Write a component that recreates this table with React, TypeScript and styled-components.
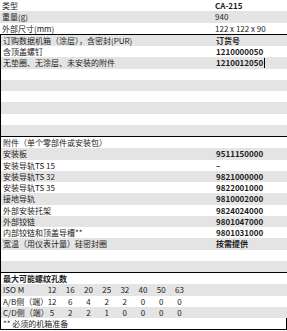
import styled, { createGlobalStyle } from 'styled-components';

const GlobalStyle = createGlobalStyle`
    html, body {
        margin: 0;
        padding: 0;
        background: #ffffff;
    }
    body {
        font-family: "Noto Sans CJK SC", "Noto Sans", sans-serif;
        font-size: 8px;
        color: #1c1c1c;
    }
`;

type Row = { label: string; value?: string; bold?: boolean; caret?: boolean };

const general: Row[] = [
    { label: '类型', value: 'CA-215', bold: true },
    { label: '重量(g)', value: '940' },
    { label: '外部尺寸(mm)', value: '122 x 122 x 90' },
];

const ordering: Row[] = [
    { label: '订购数据机箱（涂层），含密封(PUR)', value: '订货号', bold: true },
    { label: '含顶盖螺钉', value: '1210000050', bold: true },
    { label: '无垫圈、无涂层、未安装的附件', value: '1210012050', bold: true, caret: true },
    { label: '' },
    { label: '' },
    { label: '' },
    { label: '' },
    { label: '' },
    { label: '' },
];

const accessories: Row[] = [
    { label: '附件（单个零部件或安装包）' },
    { label: '安装板', value: '9511150000', bold: true },
    { label: '安装导轨TS 15', value: '–', bold: true },
    { label: '安装导轨TS 32', value: '9821000000', bold: true },
    { label: '安装导轨TS 35', value: '9822001000', bold: true },
    { label: '接地导轨', value: '9810002000', bold: true },
    { label: '外部安装托架', value: '9824024000', bold: true },
    { label: '外部铰链', value: '9801047000', bold: true },
    { label: '内部铰链和顶盖导槽**', value: '9801031000', bold: true },
    { label: '宽温（用仪表计量）硅密封圈', value: '按需提供', bold: true },
    { label: '' },
    { label: '' },
];

const sizes = ['12', '16', '20', '25', '32', '40', '50', '63'];
const sideAB = ['12', '6', '4', '2', '2', '0', '0', '0'];
const sideCD = ['5', '2', '2', '1', '0', '0', '0', '0'];

export default function App() {
    return (
        <>
            <GlobalStyle />
            <Sheet>
                <Section>
                    {general.map((r, i) => (
                        <DataRow key={i} row={r} shade={i % 2 === 1} />
                    ))}
                </Section>
                <Section $edged>
                    {ordering.map((r, i) => (
                        <DataRow key={i} row={r} shade={i % 2 === 0} />
                    ))}
                </Section>
                <Section $edged>
                    {accessories.map((r, i) => (
                        <DataRow key={i} row={r} shade={i % 2 === 1} />
                    ))}
                </Section>
                <Section $edged>
                    <Line $shade={false}>
                        <Label $bold>最大可能螺纹孔数</Label>
                    </Line>
                    <ThreadRow $shade>
                        <Label>ISO M</Label>
                        {sizes.map((s) => (
                            <Num key={s}>{s}</Num>
                        ))}
                    </ThreadRow>
                    <ThreadRow $shade={false}>
                        <Label>A/B侧（端）</Label>
                        {sideAB.map((s, i) => (
                            <Num key={i}>{s}</Num>
                        ))}
                    </ThreadRow>
                    <ThreadRow $shade>
                        <Label>C/D侧（端）</Label>
                        {sideCD.map((s, i) => (
                            <Num key={i}>{s}</Num>
                        ))}
                    </ThreadRow>
                    <Line $shade={false} $closed>
                        <Label>** 必须的机箱准备</Label>
                    </Line>
                </Section>
            </Sheet>
        </>
    );
}

const DataRow = ({ row, shade }: { row: Row; shade: boolean }) => (
    <Line $shade={shade}>
        <Label>{row.label}</Label>
        {row.value !== undefined && (
            <Value $bold={row.bold}>
                {row.value}
                {row.caret && <Caret />}
            </Value>
        )}
    </Line>
);

const Sheet = styled.div`
    width: 287px;
    display: flex;
    flex-direction: column;
`;

const Section = styled.div<{ $edged?: boolean }>`
    display: flex;
    flex-direction: column;
    border-bottom: 1px solid #000;
    border-left: ${(p) => (p.$edged ? '1px solid #000' : 'none')};
`;

const Line = styled.div<{ $shade: boolean; $closed?: boolean }>`
    height: 11.25px;
    display: grid;
    grid-template-columns: 213px 1fr;
    align-items: center;
    padding-left: 2px;
    background: ${(p) => (p.$shade ? '#e4e4e4' : '#ffffff')};
    border-right: ${(p) => (p.$closed ? '1px solid #000' : 'none')};
    line-height: 11.25px;
    white-space: nowrap;
`;

const ThreadRow = styled.div<{ $shade: boolean }>`
    height: 11.25px;
    display: grid;
    grid-template-columns: 40px repeat(8, 18.2px);
    align-items: center;
    padding-left: 2px;
    background: ${(p) => (p.$shade ? '#e4e4e4' : '#ffffff')};
    line-height: 11.25px;
    white-space: nowrap;
`;

const Label = styled.span<{ $bold?: boolean }>`
    font-weight: ${(p) => (p.$bold ? 700 : 400)};
    overflow: visible;
    min-width: 0;
`;

const Value = styled.span<{ $bold?: boolean }>`
    font-weight: ${(p) => (p.$bold ? 700 : 400)};
    display: flex;
    align-items: center;
`;

const Num = styled.span`
    text-align: center;
`;

const Caret = styled.span`
    display: inline-block;
    width: 1px;
    height: 10px;
    background: #000;
    margin-left: 1px;
`;
